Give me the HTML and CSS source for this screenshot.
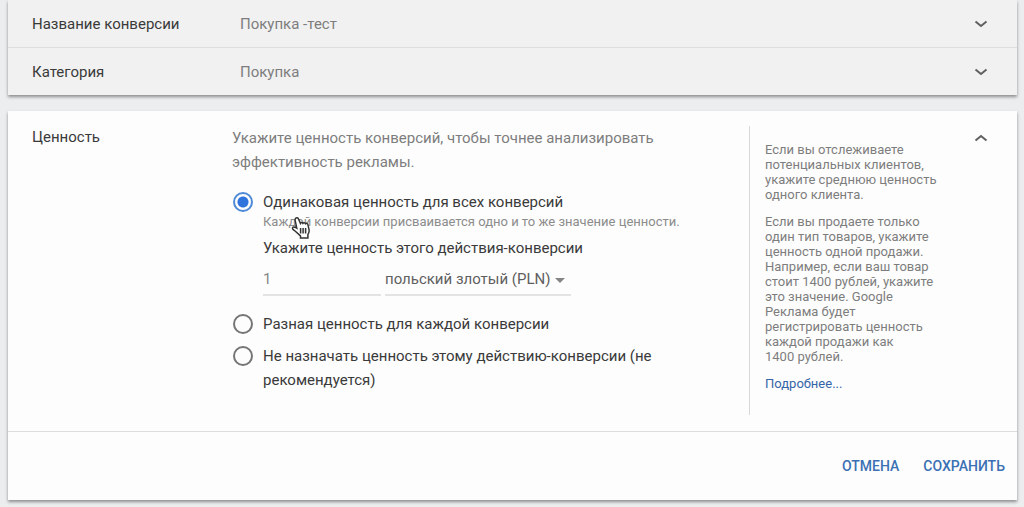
FILE: index.html
```html
<!DOCTYPE html>
<html lang="ru">
  <head>
    <meta charset="UTF-8" />
    <meta name="viewport" content="width=device-width, initial-scale=1.0" />
    <title>Ценность конверсии</title>
    <link rel="stylesheet" href="styles.css">
  </head>
  <body>
    <section class="card card-collapsed">
      <div class="row">
        <span class="row-label">Название конверсии</span>
        <span class="row-value">Покупка -тест</span>
        <button type="button" class="toggle" aria-label="Развернуть название">
          <svg width="14" height="10" viewBox="0 0 14 10"><path d="M1.500 2.500l5.500 4.500 5.500-4.500" /></svg>
        </button>
      </div>
      <div class="row">
        <span class="row-label">Категория</span>
        <span class="row-value">Покупка</span>
        <button type="button" class="toggle" aria-label="Развернуть категорию">
          <svg width="14" height="10" viewBox="0 0 14 10"><path d="M1.500 2.500l5.500 4.500 5.500-4.500" /></svg>
        </button>
      </div>
    </section>

    <form class="card">
      <div class="panel">
        <h2 class="panel-title">Ценность</h2>

        <div class="panel-main">
          <p class="intro">Укажите ценность конверсий, чтобы точнее анализировать эффективность рекламы.</p>

          <div class="option">
            <input type="radio" name="value" id="same" checked />
            <div class="option-body">
              <label for="same">Одинаковая ценность для всех конверсий</label>
              <div class="hint">
                Каждой конверсии присваивается одно и то же значение ценности.
                <svg class="cursor" width="20" height="24" viewBox="0 0 20 24">
                  <path d="M4.600 2.200c1-1 2.300-.5 2.800.6l2 4.600c.4-1 2-1.200 2.600 0 .7-.9 2-.8 2.500.3.8-.7 2.200-.3 2.400.9l1.200 5.200c.4 1.700-.5 3.700-1.200 4.900v3.300H9.500v-2.100L3.200 14.300c-1.400-.8-2.200-2-1.500-2.900.8-.9 2.100-.4 4.100.8L4.200 4.600c-.3-1-.2-1.800.4-2.400z" />
                  <path d="M9.600 12v5.500M12.100 12v5.500M14.600 12v5.500" />
                </svg>
              </div>
              <label for="amount">Укажите ценность этого действия-конверсии</label>
              <div class="fields">
                <input type="text" id="amount" class="amount" value="1" />
                <div class="currency">
                  <select aria-label="Валюта">
                    <option>польский злотый (PLN)</option>
                  </select>
                  <svg class="arrow" width="10" height="5" viewBox="0 0 10 5"><path d="M0 0h10L5 5z" /></svg>
                </div>
              </div>
            </div>
          </div>

          <div class="option">
            <input type="radio" name="value" id="different" />
            <label for="different" class="option-body">Разная ценность для каждой конверсии</label>
          </div>

          <div class="option">
            <input type="radio" name="value" id="none" />
            <label for="none" class="option-body">Не назначать ценность этому действию-конверсии (не рекомендуется)</label>
          </div>
        </div>

        <aside class="help">
          <p>Если вы отслеживаете потенциальных клиентов, укажите среднюю ценность одного клиента.</p>
          <p>Если вы продаете только один тип товаров, укажите ценность одной продажи. Например, если ваш товар стоит 1400&nbsp;рублей, укажите это значение. Google Реклама будет регистрировать ценность каждой продажи как 1400&nbsp;рублей.</p>
          <a href="#">Подробнее...</a>
        </aside>

        <button type="button" class="toggle" aria-label="Свернуть">
          <svg width="14" height="10" viewBox="0 0 14 10"><path d="M1.500 7.500l5.500-4.500 5.500 4.500" /></svg>
        </button>
      </div>

      <div class="actions">
        <button type="button">ОТМЕНА</button>
        <button type="submit">СОХРАНИТЬ</button>
      </div>
    </form>
  </body>
</html>
```
FILE: styles.css
```css
* {
  box-sizing: border-box;
}

body {
  margin: 0;
  padding: 0 7px 8px 8px;
  background-color: #ebedee;
  color: #3a3a3a;
  font-family: Roboto, "Liberation Sans", sans-serif;
  font-size: 15px;
  line-height: 24px;
}

p,
h2 {
  margin: 0;
}

.card {
  margin-bottom: 16px;
  background-color: #fdfdfd;
  box-shadow: 0 2px 3px rgba(0, 0, 0, 0.4);
}

.card-collapsed {
  background-color: #f1f1f1;
}

.row {
  display: grid;
  grid-template-columns: 208px 1fr 24px;
  align-items: center;
  height: 47px;
  padding: 0 24px;
}

.row + .row {
  height: 48px;
  border-top: 1px solid #dedede;
}

.row-value,
.intro {
  color: #7d7d7d;
}

.toggle {
  display: flex;
  align-items: center;
  justify-content: center;
  width: 24px;
  height: 24px;
  padding: 0;
  border: none;
  background: none;
  cursor: pointer;
}

.toggle path {
  fill: none;
  stroke: #606060;
  stroke-width: 2;
}

.panel {
  display: grid;
  grid-template-columns: 200px 1fr 204px 24px;
  padding: 15px 24px 16px;
}

.panel-title {
  font-size: 15px;
  font-weight: 400;
  line-height: 22px;
}

.panel-main {
  padding-right: 16px;
}

.intro {
  margin-bottom: 16px;
}

.option {
  display: flex;
  gap: 10px;
  margin-bottom: 8px;
}

.option input[type="radio"] {
  appearance: none;
  flex: none;
  width: 20px;
  height: 20px;
  margin: 2px 0 2px 1px;
  border: 2px solid #757575;
  border-radius: 50%;
}

.option input[type="radio"]:checked {
  border-color: #4f8ad6;
  background: radial-gradient(circle, #2f74dc 5px, transparent 6px);
}

.option-body {
  flex: 1;
}

.option-body > label {
  display: block;
}

.hint {
  position: relative;
  margin-bottom: 6px;
  color: #8c8c8c;
  font-size: 13px;
  line-height: 16px;
}

.cursor {
  position: absolute;
  top: 2px;
  left: 28px;
}

.cursor path {
  fill: #fff;
  stroke: #333;
  stroke-width: 1.5;
}

.fields {
  display: flex;
  gap: 4px;
  margin: 4px 0 8px;
}

.amount,
.currency select {
  height: 32px;
  padding: 0;
  border: none;
  border-bottom: 2px solid #e3e3e3;
  border-radius: 0;
  background: none;
  font: inherit;
}

.amount {
  width: 118px;
  color: #858585;
}

.currency {
  position: relative;
}

.currency select {
  appearance: none;
  width: 186px;
  color: #5f5f5f;
}

.arrow {
  position: absolute;
  top: 14px;
  right: 6px;
  fill: #858585;
  pointer-events: none;
}

.help {
  position: relative;
  padding: 16px 32px 24px 0;
  color: #7d7d7d;
  font-size: 13px;
  line-height: 15px;
}

.help::before {
  content: "";
  position: absolute;
  top: 0;
  bottom: 0;
  left: -16px;
  border-left: 1px solid #d8d8d8;
}

.help p {
  margin-bottom: 12px;
}

.help a {
  color: #3565a8;
  text-decoration: none;
}

.actions {
  display: flex;
  justify-content: flex-end;
  gap: 24px;
  padding: 22px 12px;
  border-top: 1px solid #dcdcdc;
}

.actions button {
  padding: 0;
  border: none;
  background: none;
  color: #3a70b4;
  font: inherit;
  font-size: 14px;
  font-weight: 500;
  cursor: pointer;
}
```
